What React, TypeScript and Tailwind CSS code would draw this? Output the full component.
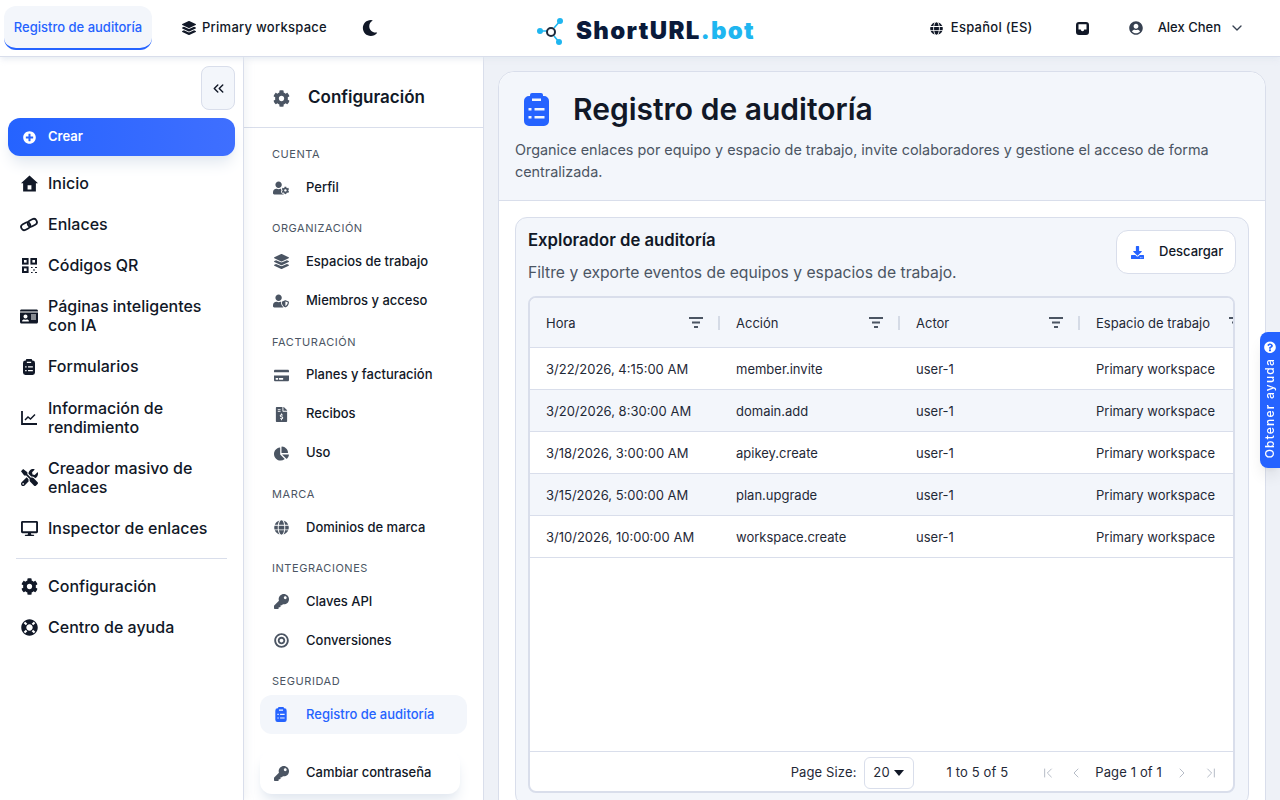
import { ReactNode } from "react"
import {
  FaBullseye, FaChartPie, FaCog, FaCreditCard, FaDesktop, FaDownload, FaFileInvoiceDollar, FaGlobe, FaIdCard, FaKey,
  FaLayerGroup, FaLifeRing, FaMoon, FaPlusCircle, FaQuestionCircle, FaTools, FaUserCircle, FaUserCog, FaUserShield,
} from "react-icons/fa"
import { FiChevronDown, FiChevronsLeft } from "react-icons/fi"
import { ChevronFirst, ChevronLast, ChevronLeft, ChevronRight } from "lucide-react"

function HomeIcon() {
  return (
    <svg width="17" height="17" viewBox="0 0 16 16" fill="currentColor">
      <path fillRule="evenodd" d="M8 .5 16 7.8h-2v7.7H2V7.8H0zM6.2 9.6v4h3.6v-4z" />
    </svg>
  )
}

function LinkIcon() {
  return (
    <svg width="19" height="15" viewBox="0 0 19 15" fill="none" stroke="currentColor" strokeWidth="1.9">
      <rect x="1" y="6" width="10" height="6.6" rx="3.3" transform="rotate(-28 6 9.3)" />
      <rect x="8" y="2.4" width="10" height="6.6" rx="3.3" transform="rotate(-28 13 5.7)" />
    </svg>
  )
}

function QrIcon() {
  return (
    <svg width="15" height="15" viewBox="0 0 15 15" fill="none" stroke="currentColor" strokeWidth="2">
      <rect x="1" y="1" width="4.6" height="4.6" />
      <rect x="9.4" y="1" width="4.6" height="4.6" />
      <rect x="1" y="9.4" width="4.6" height="4.6" />
      <path d="M9 9.5h1.6M13 9.5h2M11 12h2M9 14.5h1.6M13 14.5h2" strokeWidth="1.2" />
    </svg>
  )
}

function ClipboardIcon({ className }: { className?: string }) {
  return (
    <svg viewBox="0 0 25 33" className={className} fill="currentColor">
      <path
        fillRule="evenodd"
        d="M8 0h9a2 2 0 0 1 2 2v1h1a5 5 0 0 1 5 5v20a5 5 0 0 1-5 5H5a5 5 0 0 1-5-5V8a5 5 0 0 1 5-5h1V2a2 2 0 0 1 2-2zM8 5.500h9v2.500H8zM4.500 15h3v2.500h-3zM10.500 15h10v2.500h-10zM4.500 23h3v2.500h-3zM10.500 23h10v2.500h-10z"
      />
    </svg>
  )
}

function TrendIcon() {
  return (
    <svg width="16" height="14" viewBox="0 0 16 14" fill="none" stroke="currentColor">
      <path d="M1 0v13h15" strokeWidth="1.8" />
      <path d="M4 9l3-3 2.500 2L14 3.500" strokeWidth="1.5" />
    </svg>
  )
}

function InboxIcon() {
  return (
    <svg width="13" height="13" viewBox="0 0 13 13" fill="currentColor">
      <path fillRule="evenodd" d="M3 0h7a3 3 0 0 1 3 3v7a3 3 0 0 1-3 3H3a3 3 0 0 1-3-3V3a3 3 0 0 1 3-3zM2.500 2.200v5.300h2.300a1.700 1.700 0 0 0 3.400 0h2.300V2.200z" />
    </svg>
  )
}

const mainNav = [
  { label: "Inicio", icon: <HomeIcon /> },
  { label: "Enlaces", icon: <LinkIcon /> },
  { label: "Códigos QR", icon: <QrIcon /> },
  { label: "Páginas inteligentes con IA", icon: <FaIdCard className="text-[19px]" /> },
  { label: "Formularios", icon: <ClipboardIcon className="h-[16px] w-[12px]" /> },
  { label: "Información de rendimiento", icon: <TrendIcon /> },
  { label: "Creador masivo de enlaces", icon: <FaTools className="text-[17px]" /> },
  { label: "Inspector de enlaces", icon: <FaDesktop className="text-[17px]" /> },
]

const settings = [
  { title: "CUENTA", items: [{ label: "Perfil", icon: <FaUserCog className="text-[18px]" /> }] },
  { title: "ORGANIZACIÓN", items: [{ label: "Espacios de trabajo", icon: <FaLayerGroup /> }, { label: "Miembros y acceso", icon: <FaUserShield className="text-[18px]" /> }] },
  { title: "FACTURACIÓN", items: [{ label: "Planes y facturación", icon: <FaCreditCard /> }, { label: "Recibos", icon: <FaFileInvoiceDollar /> }, { label: "Uso", icon: <FaChartPie /> }] },
  { title: "MARCA", items: [{ label: "Dominios de marca", icon: <FaGlobe /> }] },
  { title: "INTEGRACIONES", items: [{ label: "Claves API", icon: <FaKey /> }, { label: "Conversiones", icon: <FaBullseye /> }] },
]

const rows = [
  ["3/22/2026, 4:15:00 AM", "member.invite"],
  ["3/20/2026, 8:30:00 AM", "domain.add"],
  ["3/18/2026, 3:00:00 AM", "apikey.create"],
  ["3/15/2026, 5:00:00 AM", "plan.upgrade"],
  ["3/10/2026, 10:00:00 AM", "workspace.create"],
]

function FilterIcon() {
  return (
    <svg width="14" height="11" viewBox="0 0 14 11" className="shrink-0 fill-[#4b5563]">
      <rect x="0" y="0" width="14" height="2" />
      <rect x="3" y="4.5" width="8" height="2" />
      <rect x="5" y="9" width="4" height="2" />
    </svg>
  )
}

function HeaderCell({ label, first }: { label: string; first?: boolean }) {
  return (
    <div className={`flex shrink-0 items-center pl-4 ${first ? "w-[190px]" : "w-[180px]"}`}>
      <span className="flex-1 pt-0.5 whitespace-nowrap">{label}</span>
      <FilterIcon />
      <span className="ml-[15px] h-3.5 w-0.5 bg-[#d5dbe6]" />
    </div>
  )
}

function MainNavItem({ label, icon }: { label: string; icon: ReactNode }) {
  return (
    <a className="flex items-center gap-[10px] py-[11.05px] pl-5 pr-8 text-base leading-[19px] font-medium text-[#111827]">
      <span className="flex w-[18px] shrink-0 justify-center text-[18px]">{icon}</span>
      {label}
    </a>
  )
}

function SettingsItem({ label, icon, active }: { label: string; icon: ReactNode; active?: boolean }) {
  return (
    <a className={`flex h-[39px] items-center gap-[17px] rounded-xl pl-[13px] text-[13px] font-medium ${active ? "bg-[#f3f6fb] text-[#2563ff]" : "text-[#111827]"}`}>
      <span className={`flex w-4 shrink-0 justify-center text-[15px] ${active ? "text-[#2563ff]" : "text-[#4b5563]"}`}>{icon}</span>
      {label}
    </a>
  )
}

function SectionLabel({ children }: { children: ReactNode }) {
  return <div className="pt-[14.2px] pb-1.5 pl-3 text-[11px] leading-[15px] tracking-[0.05em] text-[#4b5563]">{children}</div>
}

function Logo() {
  return (
    <div className="flex items-center gap-[12px] pt-[5px] pl-[11px]">
      <svg width="28" height="28" viewBox="0 0 28 28" fill="none">
        <path d="M18 11 L24 4 M18 19 L23 25 M4 14 H11" stroke="#1fb6f0" strokeWidth="1.6" />
        <circle cx="15" cy="15" r="4" stroke="#1e293b" strokeWidth="2" />
        <circle cx="4" cy="14" r="3" fill="#1fb6f0" />
        <circle cx="24" cy="4" r="3" fill="#1fb6f0" />
        <circle cx="23" cy="25" r="3" fill="#1fb6f0" />
      </svg>
      <span className="text-[24px] leading-none font-black tracking-[0.055em] text-[#0a1a3a]">
        ShortURL<span className="text-[#1fb6f0]">.bot</span>
      </span>
    </div>
  )
}

export default function App() {
  return (
    <div className="flex h-screen flex-col overflow-hidden bg-[#eef1f7] font-['Inter',sans-serif] text-[#111827]">
      {/* Top bar */}
      <header className="z-20 grid h-[57px] shrink-0 grid-cols-[1fr_auto_1fr] items-center border-b border-[#d9deeb] bg-white shadow-md shadow-slate-200/60">
        <div className="flex items-center">
          <a className="ml-1 flex h-11 w-[148px] items-center justify-center rounded-xl border-b-2 border-[#2563ff] bg-[#f3f6fb] pt-px text-[13px] font-medium text-[#2563ff]">
            Registro de auditoría
          </a>
          <div className="ml-[30px] flex items-center gap-[6px] text-[13px] font-medium tracking-[0.02em]">
            <FaLayerGroup className="text-[14px]" />
            Primary workspace
          </div>
          <FaMoon className="ml-[35px] text-[16px]" />
        </div>
        <Logo />
        <div className="flex items-center justify-end">
          <FaGlobe className="text-[13px]" />
          <span className="ml-2 text-[13px] font-medium tracking-[0.02em]">Español (ES)</span>
          <span className="ml-[43px]"><InboxIcon /></span>
          <FaUserCircle className="ml-[40px] text-[14px] text-[#374151]" />
          <span className="ml-[15px] text-[13px] font-medium">Alex Chen</span>
          <FiChevronDown className="mr-[35px] ml-[8px] text-[16px] text-[#374151]" />
        </div>
      </header>

      <div className="flex min-h-0 flex-1">
        {/* Main nav */}
        <aside className="z-10 flex w-[244px] shrink-0 flex-col border-r border-[#d9deeb] bg-white shadow-[3px_0_8px_rgba(148,163,184,0.12)]">
          <button className="mt-[9px] mr-2 flex h-11 w-[34px] items-center justify-center self-end rounded-lg border border-[#d9deeb] bg-[#f3f6fb]">
            <FiChevronsLeft className="text-[17px]" />
          </button>
          <a className="mx-2 mt-2 flex h-[38px] items-center gap-[12px] rounded-xl bg-gradient-to-r from-[#2563ff] to-[#3f6fff] pl-[15px] text-[13px] font-semibold text-white shadow-lg shadow-slate-200">
            <FaPlusCircle className="text-[13px]" />
            Crear
          </a>
          <nav className="mt-[7px]">
            {mainNav.map(item => <MainNavItem key={item.label} {...item} />)}
          </nav>
          <div className="mx-4 mt-[9px] mb-[7px] h-px bg-[#d9deeb]" />
          <MainNavItem label="Configuración" icon={<FaCog className="text-[17px]" />} />
          <MainNavItem label="Centro de ayuda" icon={<FaLifeRing className="text-[17px]" />} />
        </aside>

        {/* Settings nav */}
        <aside className="flex w-[240px] shrink-0 flex-col border-r border-[#d9deeb] bg-white">
          <div className="flex h-[71px] shrink-0 items-center gap-[18px] border-b border-[#d9deeb] pt-3 pl-[29px] text-[17px] font-semibold">
            <FaCog className="text-[17px] text-[#4b5563]" />
            Configuración
          </div>
          <div className="px-4 pt-[5px]">
            {settings.map(group => (
              <div key={group.title}>
                <SectionLabel>{group.title}</SectionLabel>
                {group.items.map(item => <SettingsItem key={item.label} {...item} />)}
              </div>
            ))}
            <SectionLabel>SEGURIDAD</SectionLabel>
            <SettingsItem label="Registro de auditoría" icon={<ClipboardIcon className="h-[15px] w-[12px]" />} active />
            <div className="mt-[16px] w-[200px] rounded-xl bg-white shadow-lg shadow-slate-200">
              <a className="flex h-11 items-center gap-[17px] pt-0.5 pl-[13px] text-[13px] font-medium">
                <span className="flex w-4 justify-center text-[15px] text-[#4b5563]"><FaKey /></span>
                Cambiar contraseña
              </a>
            </div>
          </div>
        </aside>

        {/* Content */}
        <main className="min-w-0 flex-1 pt-[14px] pr-[14px] pl-[14px]">
          <div className="rounded-t-2xl border border-[#d9deeb] bg-white">
            <div className="rounded-t-2xl border-b border-[#d9deeb] bg-[#f3f6fb] px-4 pt-[17px] pb-[17px]">
              <div className="flex items-center gap-[23px] pl-2">
                <ClipboardIcon className="h-[33px] w-[27px] text-[#2563ff]" />
                <h1 className="text-[30px] leading-[40px] font-semibold">Registro de auditoría</h1>
              </div>
              <p className="mt-[10px] text-[14.4px] leading-[22px] text-[#4b5563]">
                Organice enlaces por equipo y espacio de trabajo, invite colaboradores y gestione el acceso de forma centralizada.
              </p>
            </div>
            <div className="p-4">
              <section className="rounded-xl border border-[#d9deeb] bg-[#f3f6fb] pt-3 pr-[13px] pb-3 pl-3">
                <div className="flex items-start justify-between">
                  <div>
                    <h2 className="text-[16.7px] leading-[20px] font-semibold">Explorador de auditoría</h2>
                    <p className="mt-[13px] text-[15.7px] leading-[20px] text-[#4b5563]">Filtre y exporte eventos de equipos y espacios de trabajo.</p>
                  </div>
                  <button className="-mr-px flex h-11 w-[120px] items-center gap-[15px] rounded-xl border border-[#d9deeb] bg-white pl-[14px] text-[13px] font-medium">
                    <FaDownload className="text-[13px] text-[#2563ff]" />
                    Descargar
                  </button>
                </div>
                <div className="mt-[13px] flex h-[497px] flex-col overflow-hidden rounded-lg border-2 border-[#d9deeb] bg-white text-[13px] text-[#1f2937]">
                  <div className="flex h-[50px] shrink-0 items-center border-b border-[#d9deeb] bg-[#f3f6fb]">
                    <HeaderCell label="Hora" first />
                    <HeaderCell label="Acción" />
                    <HeaderCell label="Actor" />
                    <HeaderCell label="Espacio de trabajo" />
                  </div>
                  <div className="flex-1">
                    {rows.map((row, i) => (
                      <div key={row[0]} className={`flex h-[42px] items-center border-b border-[#d9deeb] pt-0.5 ${i % 2 ? "bg-[#f3f6fb]" : "bg-white"}`}>
                        <span className="w-[206px] shrink-0 pl-4 whitespace-nowrap">{row[0]}</span>
                        <span className="w-[180px] shrink-0">{row[1]}</span>
                        <span className="w-[180px] shrink-0">user-1</span>
                        <span className="whitespace-nowrap">Primary workspace</span>
                      </div>
                    ))}
                  </div>
                  <div className="flex h-[40px] shrink-0 items-center justify-end border-t border-[#d9deeb] pt-0.5 pr-[14px] tracking-[0.01em]">
                    <span>Page Size:</span>
                    <span className="ml-[7px] flex h-8 w-[50px] items-center justify-center gap-1 rounded-md border border-[#d9deeb]">
                      20
                      <svg width="10" height="6" viewBox="0 0 10 6" className="fill-[#111827]"><path d="M0 0h10L5 6z" /></svg>
                    </span>
                    <span className="ml-[33px]">1 to 5 of 5</span>
                    <ChevronFirst size={16} strokeWidth={1.5} className="ml-[32px] text-[#b6bcc7]" />
                    <ChevronLeft size={16} strokeWidth={1.5} className="ml-[12px] text-[#b6bcc7]" />
                    <span className="ml-[11px]">Page 1 of 1</span>
                    <ChevronRight size={16} strokeWidth={1.5} className="ml-3 text-[#b6bcc7]" />
                    <ChevronLast size={16} strokeWidth={1.5} className="ml-[13px] text-[#b6bcc7]" />
                  </div>
                </div>
              </section>
            </div>
          </div>
        </main>
      </div>

      {/* Help tab */}
      <a className="fixed top-[332px] right-0 flex h-[136px] w-5 items-center justify-center rounded-l-lg bg-[#2563ff] shadow-lg">
        <span className="flex rotate-180 items-center gap-[5px] whitespace-nowrap text-[12px] font-medium tracking-[0.1em] text-white [writing-mode:vertical-rl]">
          Obtener ayuda
          <FaQuestionCircle className="rotate-180 text-[12px]" />
        </span>
      </a>
    </div>
  )
}
